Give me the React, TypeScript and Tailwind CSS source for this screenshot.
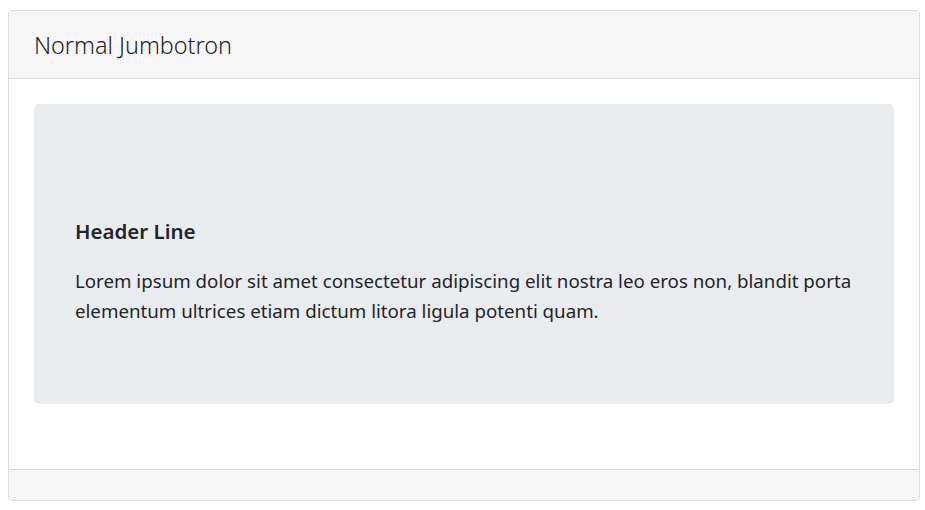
export default function App() {
  return (
    <div className="w-[925px] h-[510px] bg-white pt-[10px] px-[8px]" style={{ fontFamily: '"Noto Sans", sans-serif' }}>
      <div className="w-[912px] h-[491px] border border-[#dcdcdc] rounded-[4px] flex flex-col overflow-hidden">
        <div className="h-[68px] bg-[#f6f6f6] border-b border-[#dcdcdc] flex items-center px-[25px] pt-[2px]">
          <span className="text-[23.4px] font-light text-[#212529]">Normal Jumbotron</span>
        </div>
        <div className="flex-1 bg-white px-[25px] pt-[25px]">
          <div className="h-[300px] bg-[#e9ecef] rounded-[5px] flex flex-col pt-[115px] pl-[41px] pr-[36px] text-[#212529]">
            <h2 className="text-[20.5px] font-semibold leading-[24px] mb-[23px]">Header Line</h2>
            <p className="text-[18.72px] leading-[30px]">
              Lorem ipsum dolor sit amet consectetur adipiscing elit nostra leo eros non, blandit porta elementum ultrices etiam dictum litora ligula potenti quam.
            </p>
          </div>
        </div>
        <div className="h-[31px] bg-[#f6f6f6] border-t border-[#dcdcdc]" />
      </div>
    </div>
  );
}
